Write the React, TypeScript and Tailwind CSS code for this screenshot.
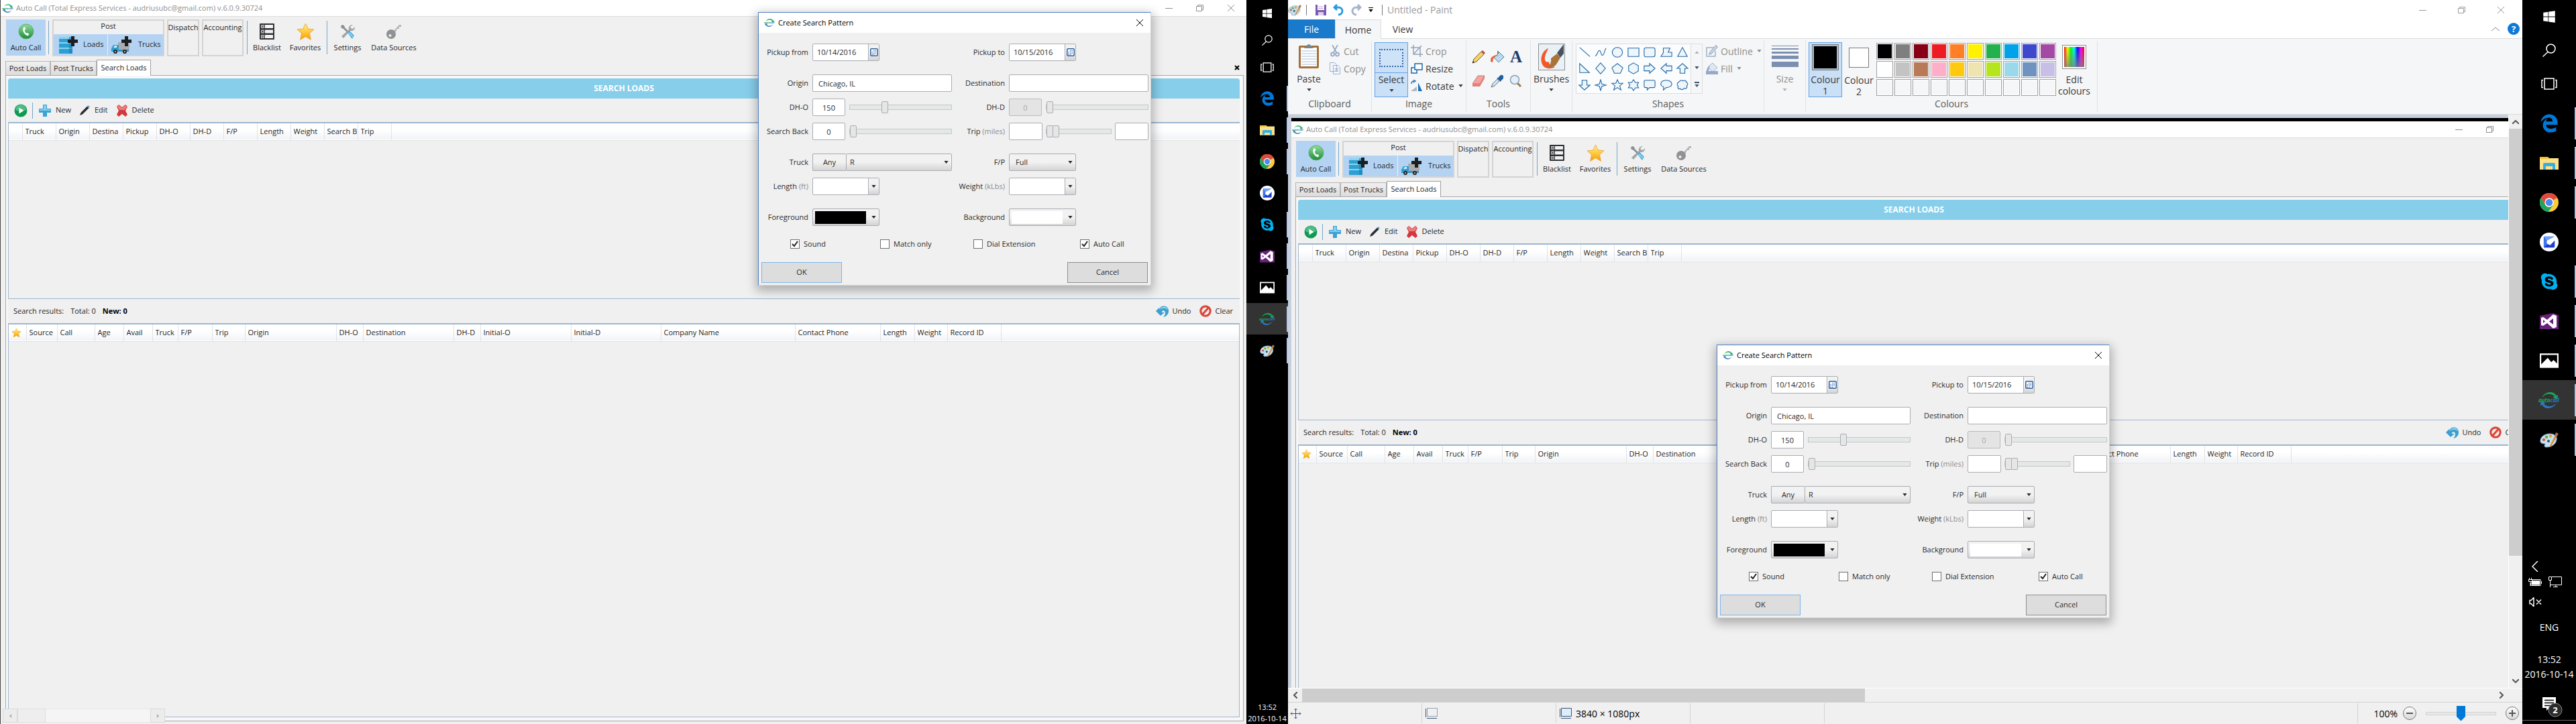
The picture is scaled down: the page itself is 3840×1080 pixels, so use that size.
import React, { useId } from "react";
import { FaWindows, FaSkype } from "react-icons/fa";
import { FaEdgeLegacy } from "react-icons/fa6";

type Kids = { children?: React.ReactNode };

/* ---------- icons ---------- */

function Logo({ className }: { className: string }) {
  return (
    <svg viewBox="0 0 24 20" className={className} aria-hidden="true">
      <path d="M4 7C7 0 17-1 20 5l2-1-1 5-5-2 2-1C15 2 8 2 4 7z" fill="#16a757" />
      <path d="M20 13c-3 7-13 8-16 2l-2 1 1-5 5 2-2 1c3 4 10 4 14-1z" fill="#2f77bd" />
      <text x="0" y="12" fontSize="6" fontStyle="italic" fontWeight="700" fontFamily="Open Sans, sans-serif" fill="#16a757">
        auto<tspan fill="#2f77bd">call</tspan>
      </text>
    </svg>
  );
}

function Phone() {
  return (
    <svg viewBox="0 0 24 24" className="size-6" aria-hidden="true">
      <defs>
        <linearGradient id="phoneGreen" x1="0" y1="0" x2="0" y2="1">
          <stop offset="0" stopColor="#8fdc9a" />
          <stop offset="1" stopColor="#1d8c3c" />
        </linearGradient>
      </defs>
      <circle cx="12" cy="12" r="11" fill="url(#phoneGreen)" stroke="#58b26b" />
      <path d="M8.500 5.500c-3 4-.5 10.500 6 13l2-2.500-2.500-2-1.500.8c-2-1.300-2.700-3-2.700-5l1.500-1-.8-3.500z" fill="#fff" />
    </svg>
  );
}

function LoadsIcon() {
  return (
    <svg viewBox="0 0 30 28" className="h-7 w-[30px]" aria-hidden="true">
      <rect x="1" y="2" width="20" height="25" rx="1" fill="#2e9fd2" />
      <path d="M1 2h20v3H1zM1 10h20v2H1zM1 18h20v2H1z" fill="#8ad4f0" />
      <path d="M16 2h5v25h-5z" fill="#1b7eb0" opacity=".6" />
      <path d="M19 1h5v5h5v5h-5v5h-5v-5h-5V6h5z" fill="#1c1f22" />
    </svg>
  );
}

function TrucksIcon() {
  return (
    <svg viewBox="0 0 34 28" className="h-7 w-[34px]" aria-hidden="true">
      <path d="M11 10h15l2 3v8H11z" fill="#a9abae" />
      <path d="M1 24v-5l3-5h8v10z" fill="#2e9fd2" />
      <path d="M4 18l2-3h3v3z" fill="#d8effa" />
      <path d="M12 21h15v3H12z" fill="#3f8fb8" />
      <circle cx="7" cy="24" r="3" fill="#222" />
      <circle cx="21" cy="24" r="3" fill="#222" />
      <circle cx="7" cy="24" r="1" fill="#ddd" />
      <circle cx="21" cy="24" r="1" fill="#ddd" />
      <path d="M21 1h5v5h5v5h-5v5h-5v-5h-5V6h5z" fill="#1c1f22" />
    </svg>
  );
}

function Blacklist() {
  return (
    <svg viewBox="0 0 24 26" className="h-[26px] w-6" aria-hidden="true">
      <rect x="1" y="1" width="22" height="24" rx="1" fill="#2f3134" />
      <path d="M9 3h12v5H9zM9 10.500h12v5H9zM9 18h12v5H9z" fill="#f2f2f2" />
      <path d="M3 3h5v5H3zM3 10.500h5v5H3zM3 18h5v5H3z" fill="#c9c9c9" />
      <path d="M4 4l3 3m0-3L4 7M4 11.500l3 3m0-3l-3 3M4 19l3 3m0-3l-3 3" stroke="#222" />
    </svg>
  );
}

function Star({ className }: { className: string }) {
  return (
    <svg viewBox="0 0 24 24" className={className} aria-hidden="true">
      <defs>
        <linearGradient id="starGold" x1="0" y1="0" x2="0" y2="1">
          <stop offset="0" stopColor="#fff0a0" />
          <stop offset=".5" stopColor="#fdcb3c" />
          <stop offset="1" stopColor="#f49a10" />
        </linearGradient>
      </defs>
      <path d="M12 1l3.300 7 7.700.8-5.700 5.200 1.700 8.500-7-4.200-7 4.200L6.700 14 1 8.800 8.700 8z" fill="url(#starGold)" stroke="#eda52c" strokeWidth=".8" />
    </svg>
  );
}

function Tools() {
  return (
    <svg viewBox="0 0 24 24" className="size-6" aria-hidden="true">
      <path d="M20 2a5.500 5.500 0 00-6 7L3 19l3 3L16 11a5.500 5.500 0 007-6l-3 3-3-1-.5-2.500z" fill="#a4a7aa" />
      <path d="M2 4l2-2 3 1 1 3 5 5-2 2-5-5-3-1z" fill="#8d9094" />
      <path d="M12 14l3-3 7 7-3 5z" fill="#3ba7dc" />
      <path d="M13 15l2-2 6 6-1 2z" fill="#8ed0ee" />
    </svg>
  );
}

function Key() {
  return (
    <svg viewBox="0 0 24 24" className="size-6" aria-hidden="true">
      <path d="M11 12L20 2h3v3h-3v3h-3l-3 6z" fill="#b4b6b8" />
      <circle cx="8" cy="16" r="7" fill="#8f9194" />
      <circle cx="6.500" cy="18" r="2" fill="#efefef" />
    </svg>
  );
}

function Play() {
  return (
    <svg viewBox="0 0 20 20" className="size-5" aria-hidden="true">
      <circle cx="10" cy="10" r="9.500" fill="#0f9a52" />
      <path d="M2 9a8 8 0 0116 0c-5 2-11 2-16 0z" fill="#6cc99a" opacity=".7" />
      <path d="M7.500 5.500l7 4.500-7 4.500z" fill="#fff" />
    </svg>
  );
}

function Plus() {
  return (
    <svg viewBox="0 0 18 18" className="size-[18px]" aria-hidden="true">
      <path d="M6 0h6v6h6v6h-6v6H6v-6H0V6h6z" fill="#3aa3d5" />
      <path d="M7 1h4v6h6v2H1V7h6z" fill="#86cdec" />
    </svg>
  );
}

function Pen() {
  return (
    <svg viewBox="0 0 16 16" className="size-4" aria-hidden="true">
      <path d="M1 15l1.500-4L12 1.500 14.500 4 5 13.500z" fill="#2b2d30" />
      <path d="M12 1.500L13.500 0 16 2.500 14.500 4z" fill="#5aa8d0" />
    </svg>
  );
}

function Cross() {
  return (
    <svg viewBox="0 0 18 18" className="size-[18px]" aria-hidden="true">
      <path d="M1 3l3-3 5 4 5-4 3 3-3 6 3 6-3 3-5-4-5 4-3-3 3-6z" fill="#d2383c" />
      <path d="M2 3l2-2 5 4 5-4 2 2-3 5H5z" fill="#ea7f80" />
    </svg>
  );
}

function UndoIcon() {
  return (
    <svg viewBox="0 0 20 18" className="h-[18px] w-5" aria-hidden="true">
      <path d="M0 9l5-5v3C6 0 18-1 19 8c.5 5-3 9-8 10 3-3 4-7 2-9-2-1.500-4-.5-4 2h4l-6 5z" fill="#3c9fd0" />
      <path d="M6 7c2-6 11-6 12 0-4-3-8-3-12 0z" fill="#93d3ee" />
    </svg>
  );
}

function ClearIcon() {
  return (
    <svg viewBox="0 0 20 20" className="size-[18px]" aria-hidden="true">
      <circle cx="10" cy="10" r="8" fill="#fbe9e6" stroke="#d6483c" strokeWidth="3.500" />
      <path d="M5 15.500L15 4.500" stroke="#d6483c" strokeWidth="3.500" />
    </svg>
  );
}

function Calendar() {
  return (
    <svg viewBox="0 0 12 12" className="size-3" aria-hidden="true">
      <rect x=".75" y=".75" width="10.500" height="10.500" rx="1.500" fill="#fff" stroke="#2c5f9f" strokeWidth="1.500" />
      <path d="M5 3.500h5M2.500 5.500h7.500M2.500 7.500h7.500M2.500 9.500h4" stroke="#3d72b4" strokeDasharray="1.500 1" strokeWidth="1.200" />
    </svg>
  );
}

function Caret({ className }: { className: string }) {
  return (
    <svg viewBox="0 0 8 5" className={className} aria-hidden="true">
      <path d="M0 0h8L4 5z" fill="currentColor" />
    </svg>
  );
}

function PaletteIcon({ className }: { className: string }) {
  return (
    <svg viewBox="0 0 28 24" className={className} aria-hidden="true">
      <path d="M1 15C0 8 7 3 15 3c7 0 11 4 10 9-1 7-8 11-15 11-3 0-4-2-2-4 1-2-6 0-7-4z" fill="#c5e0f0" stroke="#7aa7c4" />
      <circle cx="6" cy="12" r="2" fill="#e0453a" />
      <circle cx="10" cy="8" r="2.200" fill="#5fb336" />
      <circle cx="16" cy="6.500" r="2.200" fill="#e7a21c" />
      <circle cx="13" cy="14" r="2" fill="#28557a" />
      <path d="M14 23l8-16 3 1-9 15z" fill="#e08a35" />
      <path d="M22 7l2-6 4 2-3 5z" fill="#a97748" />
    </svg>
  );
}

function MinGlyph() {
  return (
    <svg viewBox="0 0 12 12" className="size-3" aria-hidden="true">
      <path d="M0 6.500h11" stroke="currentColor" />
    </svg>
  );
}
function RestoreGlyph() {
  return (
    <svg viewBox="0 0 12 12" className="size-3" fill="none" stroke="currentColor" aria-hidden="true">
      <path d="M.5 3.500h8v7h-8zM2.500 3.500v-2h8v7h-2" />
    </svg>
  );
}
function CloseGlyph() {
  return (
    <svg viewBox="0 0 12 12" className="size-3" stroke="currentColor" aria-hidden="true">
      <path d="M1 1l10 10M11 1L1 11" />
    </svg>
  );
}

/* ---------- pattern dialog ---------- */

const box = "border border-[#abadb3] rounded-[2px] bg-white";
const grad = "bg-linear-to-b from-[#f2f2f2] from-50% to-[#d4d4d4]";
const rangeCls =
  "block h-[18px] w-full min-w-0 appearance-none bg-transparent [&::-webkit-slider-runnable-track]:h-2 [&::-webkit-slider-runnable-track]:border [&::-webkit-slider-runnable-track]:border-[#c3c8c8] [&::-webkit-slider-runnable-track]:bg-[#e4e9e7] [&::-webkit-slider-thumb]:-mt-[6px] [&::-webkit-slider-thumb]:h-[18px] [&::-webkit-slider-thumb]:w-[10px] [&::-webkit-slider-thumb]:appearance-none [&::-webkit-slider-thumb]:rounded-[2px] [&::-webkit-slider-thumb]:border [&::-webkit-slider-thumb]:border-[#adadb3] [&::-webkit-slider-thumb]:bg-[#e6e6e6]";
const overlayRangeCls =
  "pointer-events-none absolute inset-0 block h-[18px] w-full appearance-none bg-transparent [&::-webkit-slider-thumb]:h-[18px] [&::-webkit-slider-thumb]:w-[10px] [&::-webkit-slider-thumb]:appearance-none [&::-webkit-slider-thumb]:rounded-[2px] [&::-webkit-slider-thumb]:border [&::-webkit-slider-thumb]:border-[#adadb3] [&::-webkit-slider-thumb]:bg-[#e6e6e6]";

function FieldLabel({ htmlFor, text, unit }: { htmlFor: string; text: string; unit?: string }) {
  return (
    <label htmlFor={htmlFor} className="pr-[6px] text-right whitespace-nowrap">
      {text}
      {unit && <span className="text-[#8c8c8c]"> {unit}</span>}
    </label>
  );
}

function Row({ top, children }: Kids & { top: string }) {
  return <div className={`grid h-[26px] grid-cols-[80px_208px_85px_208px] items-center ${top}`}>{children}</div>;
}

function DateField({ id, value }: { id: string; value: string }) {
  return (
    <div className={`flex h-[26px] w-[100px] ${box}`}>
      <input id={id} defaultValue={value} className="min-w-0 flex-1 pl-[6px]" />
      <button aria-label="Open calendar" className={`flex w-4 items-center justify-center border-l border-[#abadb3] ${grad}`}>
        <Calendar />
      </button>
    </div>
  );
}

function ComboField({ id }: { id: string }) {
  return (
    <div className={`flex h-[26px] w-[100px] ${box}`}>
      <input id={id} className="min-w-0 flex-1 pl-[6px]" />
      <button aria-label="Open list" className={`flex w-4 items-center justify-center border-l border-[#abadb3] ${grad}`}>
        <Caret className="h-1 w-[7px]" />
      </button>
    </div>
  );
}

function ColorField({ id, swatch }: { id: string; swatch: string }) {
  return (
    <button id={id} className={`flex h-[26px] w-[100px] items-center justify-between border border-[#abadb3] rounded-[2px] pr-1 pl-[3px] ${grad}`}>
      <span className={`h-[19px] w-[76px] ${swatch}`} />
      <Caret className="h-1 w-[7px]" />
    </button>
  );
}

function SelectField({ id, options, pad }: { id: string; options: string[]; pad: string }) {
  return (
    <div className="relative h-full w-full">
      <select id={id} className={`h-full w-full appearance-none border border-[#abadb3] rounded-[2px] ${pad} ${grad}`}>
        {options.map((o) => (
          <option key={o}>{o}</option>
        ))}
      </select>
      <Caret className="pointer-events-none absolute top-[11px] right-[5px] h-1 w-[7px]" />
    </div>
  );
}

function Check({ id, text, checked }: { id: string; text: string; checked?: boolean }) {
  return (
    <div className="flex items-center gap-[6px]">
      <span className="relative block size-[14px]">
        <input id={id} type="checkbox" defaultChecked={checked} className="peer block size-[14px] appearance-none border border-[#707070] bg-white" />
        <svg viewBox="0 0 14 14" className="pointer-events-none absolute inset-0 hidden size-[14px] peer-checked:block" aria-hidden="true">
          <path d="M3 7l3 3 5-7" fill="none" stroke="#212121" strokeWidth="2" />
        </svg>
      </span>
      <label htmlFor={id}>{text}</label>
    </div>
  );
}

function PatternDialog({ place }: { place: string }) {
  const id = useId();
  const num = `h-[26px] text-center ${box}`;
  return (
    <section
      aria-label="Create Search Pattern"
      className={`absolute ${place} h-[408px] w-[586px] border border-[#d4d4d4] border-t-[#4a7fc8] border-l-[#4a7fc8] bg-[#f0f0f0] text-[11px] text-[#2b2b2b] shadow-[0_5px_14px_3px_rgba(0,0,0,0.28)]`}
    >
      <header className="flex h-[30px] items-center bg-white pl-2 text-black">
        <Logo className="h-[14px] w-4" />
        <h2 className="ml-[5px] flex-1">Create Search Pattern</h2>
        <button aria-label="Close dialog" className="mr-[10px]">
          <CloseGlyph />
        </button>
      </header>
      <Row top="mt-4">
        <FieldLabel htmlFor={`${id}from`} text="Pickup from" />
        <DateField id={`${id}from`} value="10/14/2016" />
        <FieldLabel htmlFor={`${id}to`} text="Pickup to" />
        <DateField id={`${id}to`} value="10/15/2016" />
      </Row>
      <Row top="mt-5">
        <FieldLabel htmlFor={`${id}origin`} text="Origin" />
        <input id={`${id}origin`} defaultValue="Chicago, IL" className={`h-[26px] pl-2 ${box}`} />
        <FieldLabel htmlFor={`${id}dest`} text="Destination" />
        <input id={`${id}dest`} className={`h-[26px] pl-2 ${box}`} />
      </Row>
      <Row top="mt-[10px]">
        <FieldLabel htmlFor={`${id}dho`} text="DH-O" />
        <div className="flex items-center gap-[6px]">
          <input id={`${id}dho`} defaultValue="150" className={`w-[49px] shrink-0 ${num}`} />
          <input type="range" aria-label="DH-O distance" min={0} max={450} defaultValue={150} className={rangeCls} />
        </div>
        <FieldLabel htmlFor={`${id}dhd`} text="DH-D" />
        <div className="flex items-center gap-[6px]">
          <input id={`${id}dhd`} defaultValue="0" disabled className="h-[26px] w-[49px] shrink-0 rounded-[2px] border border-[#b9babd] bg-[#e4e4e4] text-center text-[#a8a8a8]" />
          <input type="range" aria-label="DH-D distance" min={0} max={450} defaultValue={0} disabled className={rangeCls} />
        </div>
      </Row>
      <Row top="mt-[10px]">
        <FieldLabel htmlFor={`${id}back`} text="Search Back" />
        <div className="flex items-center gap-[6px]">
          <input id={`${id}back`} defaultValue="0" className={`w-[49px] shrink-0 ${num}`} />
          <input type="range" aria-label="Search back hours" min={0} max={24} defaultValue={0} className={rangeCls} />
        </div>
        <FieldLabel htmlFor={`${id}trip`} text="Trip" unit="(miles)" />
        <div className="flex items-center gap-[5px]">
          <input id={`${id}trip`} className={`w-[50px] shrink-0 ${num}`} />
          <span className="relative min-w-0 flex-1">
            <input type="range" aria-label="Trip minimum" min={0} max={88} defaultValue={0} className={rangeCls} />
            <input type="range" aria-label="Trip maximum" min={0} max={88} defaultValue={10} className={overlayRangeCls} />
          </span>
          <input aria-label="Trip maximum miles" className={`w-[50px] shrink-0 ${num}`} />
        </div>
      </Row>
      <Row top="mt-5">
        <FieldLabel htmlFor={`${id}truck`} text="Truck" />
        <div className="flex h-[26px]">
          <button className={`w-[50px] shrink-0 rounded-l-[2px] border border-r-0 border-[#abadb3] ${grad}`}>Any</button>
          <SelectField id={`${id}truck`} options={["R", "V", "F"]} pad="pl-[5px]" />
        </div>
        <FieldLabel htmlFor={`${id}fp`} text="F/P" />
        <div className="h-[26px] w-[100px]">
          <SelectField id={`${id}fp`} options={["Full", "Partial"]} pad="pl-[9px]" />
        </div>
      </Row>
      <Row top="mt-[10px]">
        <FieldLabel htmlFor={`${id}len`} text="Length" unit="(ft)" />
        <ComboField id={`${id}len`} />
        <FieldLabel htmlFor={`${id}wt`} text="Weight" unit="(kLbs)" />
        <ComboField id={`${id}wt`} />
      </Row>
      <Row top="mt-5">
        <FieldLabel htmlFor={`${id}fg`} text="Foreground" />
        <ColorField id={`${id}fg`} swatch="bg-black" />
        <FieldLabel htmlFor={`${id}bg`} text="Background" />
        <ColorField id={`${id}bg`} swatch="bg-white" />
      </Row>
      <div className="mt-[19px] grid grid-cols-[134px_139px_159px_auto] pl-[47px]">
        <Check id={`${id}sound`} text="Sound" checked />
        <Check id={`${id}match`} text="Match only" />
        <Check id={`${id}dial`} text="Dial Extension" />
        <Check id={`${id}auto`} text="Auto Call" checked />
      </div>
      <div className="mt-[18px] flex justify-between px-1">
        <button className="h-[31px] w-[120px] border border-[#7eb4ea] bg-[#dddddd]">OK</button>
        <button className="h-[31px] w-[120px] border border-[#8e8e8e] bg-[#dddddd]">Cancel</button>
      </div>
    </section>
  );
}

/* ---------- load board window ---------- */

function ToolButton({ width, label, active, children }: Kids & { width: string; label: string; active?: boolean }) {
  return (
    <button className={`flex h-[54px] flex-col items-center justify-between pt-[5px] pb-1 ${width} ${active ? "bg-[#b4d3f2]" : ""}`}>
      <span className="flex h-[26px] items-center">{children}</span>
      <span className="leading-4 whitespace-nowrap">{label}</span>
    </button>
  );
}

function Divider({ className }: { className: string }) {
  return <span className={`w-px bg-[#74a5cc] ${className}`} />;
}

type Col = [React.ReactNode, number];

const patternCols: Col[] = [
  ["", 20], ["Truck", 50], ["Origin", 50], ["Destina", 50], ["Pickup", 50], ["DH-O", 50], ["DH-D", 50],
  ["F/P", 50], ["Length", 50], ["Weight", 50], ["Search B", 50], ["Trip", 50],
];

const resultCols: Col[] = [
  [<Star key="s" className="size-[15px]" />, 26], ["Source", 46], ["Call", 56], ["Age", 43], ["Avail", 43], ["Truck", 38], ["F/P", 51],
  ["Trip", 49], ["Origin", 136], ["DH-O", 40], ["Destination", 135], ["DH-D", 40], ["Initial-O", 135], ["Initial-D", 134],
  ["Company Name", 200], ["Contact Phone", 127], ["Length", 51], ["Weight", 49], ["Record ID", 80],
];

function HeaderTable({ cols }: { cols: Col[] }) {
  return (
    <table className="w-full table-fixed border-collapse">
      <colgroup>
        {cols.map((c, i) => (
          <col key={i} style={{ width: c[1] }} />
        ))}
        <col />
      </colgroup>
      <thead>
        <tr className="h-[25px] border-b border-[#dfe1e4] bg-linear-to-b from-white from-40% to-[#f1f3f6]">
          {cols.map((c, i) => (
            <th key={i} scope="col" className="overflow-hidden border-r border-[#e0e2e5] pr-px pl-1 text-left font-normal whitespace-nowrap">
              <span className="block overflow-hidden">{c[0]}</span>
            </th>
          ))}
          <th aria-hidden="true" />
        </tr>
      </thead>
    </table>
  );
}

function BoardWindow({ dialogPlace }: { dialogPlace: string }) {
  const tab = "h-[21px] border border-b-0 border-[#b5b5b5] bg-linear-to-b from-[#f0f0f0] to-[#dcdcdc]";
  const groupBox = "flex h-[55px] justify-center border-2 border-[#d3d3d3] pt-[2px] leading-4";
  return (
    <div className="relative flex h-full w-full flex-col border-l border-[#444] bg-[#f0f0f0] text-[11px] text-[#262626]">
      <header className="flex h-[25px] items-center border-b border-[#dcdcdc] bg-white pl-[2px] text-[#8f8f8f]">
        <Logo className="h-[15px] w-[17px]" />
        <h1 className="ml-1 flex-1">Auto Call (Total Express Services - audriusubc@gmail.com) v.6.0.9.30724</h1>
        <button aria-label="Minimise" className="flex w-[46px] justify-center"><MinGlyph /></button>
        <button aria-label="Restore" className="flex w-[46px] justify-center"><RestoreGlyph /></button>
        <button aria-label="Close" className="flex w-[46px] justify-center"><CloseGlyph /></button>
      </header>

      <nav className="flex h-16 items-start pt-1 pl-2" aria-label="Main tools">
        <ToolButton width="w-[59px]" label="Auto Call" active><Phone /></ToolButton>
        <Divider className="mt-[2px] ml-1 h-[50px]" />
        <div className="ml-[5px] h-[55px] w-[167px] border-2 border-[#d3d3d3]">
          <div className="h-5 text-center leading-4">Post</div>
          <div className="flex h-[31px] gap-px">
            <button className="flex w-[80px] items-center gap-[7px] bg-[#b4d3f2] pl-[7px]"><LoadsIcon />Loads</button>
            <button className="flex flex-1 items-center gap-[7px] bg-[#b4d3f2] pl-1"><TrucksIcon />Trucks</button>
          </div>
        </div>
        <div className={`ml-1 w-[48px] ${groupBox}`}>Dispatch</div>
        <div className={`ml-1 w-[62px] ${groupBox}`}>Accounting</div>
        <Divider className="mt-[2px] ml-[5px] h-[50px]" />
        <ToolButton width="ml-[3px] w-[52px]" label="Blacklist"><Blacklist /></ToolButton>
        <ToolButton width="ml-1 w-[54px]" label="Favorites"><Star className="size-[27px]" /></ToolButton>
        <Divider className="mt-[2px] ml-[5px] h-[50px]" />
        <ToolButton width="ml-[3px] w-[54px]" label="Settings"><Tools /></ToolButton>
        <ToolButton width="ml-[2px] w-[80px]" label="Data Sources"><Key /></ToolButton>
      </nav>

      <div className="relative z-10 flex h-6 items-end pl-[7px]" role="tablist">
        <button role="tab" className={`w-[67px] ${tab} mb-px`}>Post Loads</button>
        <button role="tab" className={`w-[69px] ${tab} mb-px`}>Post Trucks</button>
        <button role="tab" aria-selected="true" className="h-6 w-[81px] border border-b-0 border-[#a0a0a0] bg-white">Search Loads</button>
        <span className="flex-1" />
        <button aria-label="Close tab" className="mr-[10px] mb-[8px] text-black">
          <svg viewBox="0 0 8 8" className="size-2" stroke="currentColor" strokeWidth="2" aria-hidden="true"><path d="M1 1l6 6M7 1L1 7" /></svg>
        </button>
      </div>

      <main className="-mt-px mr-1 mb-1 ml-[7px] flex min-h-0 flex-1 flex-col border border-[#a9a9a9] bg-[#f8f8f8] pt-1 pr-[5px] pb-[5px] pl-[3px]">
        <div className="flex min-h-0 flex-1 flex-col bg-[#f0f0f0]">
          <h2 className="flex h-[30px] shrink-0 items-center justify-center rounded-t-[4px] bg-[#87ceeb] text-[12px] font-bold text-white">SEARCH LOADS</h2>
          <div className="flex h-[35px] shrink-0 items-center pl-[9px]">
            <button aria-label="Run search"><Play /></button>
            <Divider className="ml-[7px] h-6" />
            <button className="ml-[9px] flex items-center gap-[7px]"><Plus />New</button>
            <button className="ml-3 flex items-center gap-[7px]"><Pen />Edit</button>
            <button className="ml-3 flex items-center gap-[6px]"><Cross />Delete</button>
          </div>
          <div className="h-[264px] shrink-0 border border-t-2 border-r-0 border-[#9db6d0]">
            <HeaderTable cols={patternCols} />
          </div>
          <div className="flex h-9 shrink-0 items-center pr-[10px] pl-2">
            <span>Search results:</span>
            <span className="ml-[10px]">Total: 0</span>
            <strong className="ml-[10px] text-black">New: 0</strong>
            <span className="flex-1" />
            <button className="flex items-center gap-1"><UndoIcon />Undo</button>
            <button className="ml-3 flex items-center gap-[6px]"><ClearIcon />Clear</button>
          </div>
          <div className="min-h-0 flex-1 border border-t-2 border-[#9db6d0]">
            <HeaderTable cols={resultCols} />
          </div>
        </div>
      </main>
      <PatternDialog place={dialogPlace} />
    </div>
  );
}

/* ---------- task bar ---------- */

function FolderIcon() {
  return (
    <svg viewBox="0 0 28 24" className="h-full w-full" aria-hidden="true">
      <path d="M0 3h12l2 2h14v17H0z" fill="#fbe08b" />
      <path d="M0 3h12l1 3H0z" fill="#f2c230" />
      <path d="M5 22v-8q0-2 2-2h14q2 0 2 2v8h-4v-5H9v5z" fill="#35aee2" />
    </svg>
  );
}
function ChromeIcon() {
  return (
    <svg viewBox="0 0 24 24" className="h-full w-full" aria-hidden="true">
      <circle cx="12" cy="12" r="12" fill="#fccb3c" />
      <path d="M12 12L1.600 6A12 12 0 0122.400 6z" fill="#dd4b3e" />
      <path d="M12 6h10.400A12 12 0 001.600 6l5.200 9z" fill="#dd4b3e" />
      <path d="M1.600 6l5.200 9A6 6 0 0012 18l-1 6A12 12 0 011.600 6z" fill="#1da362" />
      <path d="M11 24l6.200-9L12 17z" fill="#1da362" />
      <circle cx="12" cy="12" r="5.700" fill="#fff" />
      <circle cx="12" cy="12" r="4.500" fill="#4a8af4" />
    </svg>
  );
}
function SwirlIcon() {
  return (
    <svg viewBox="0 0 24 24" className="h-full w-full" aria-hidden="true">
      <circle cx="12" cy="12" r="12" fill="#fff" />
      <path d="M5 6q0-1 1-1h13l-8 6 8-1v8q0 1-1 1H6q-1 0-1-1z" fill="#3f74f0" />
      <path d="M5 19l6-5 3 2 5-6v8q0 1-1 1z" fill="#1c3fd0" />
      <path d="M9 10l10-5v5l-6 6-4-2z" fill="#fff" />
      <path d="M5 5h14L9 10z" fill="#6fa0ff" />
    </svg>
  );
}
function StudioIcon() {
  return (
    <svg viewBox="0 0 28 24" className="h-full w-full" aria-hidden="true">
      <path d="M0 4l20-4 8 3v21H0z" fill="#68217a" />
      <path fillRule="evenodd" d="M2 7l3-1 6 4 9-8 5 2v17l-5 2-9-8-6 4-3-1zm3 3v5l3-2.500zm15-2l-6 4.500 6 4.500z" fill="#fff" />
    </svg>
  );
}
function PhotoIcon() {
  return (
    <svg viewBox="0 0 26 24" className="h-full w-full" aria-hidden="true">
      <path d="M0 2h26v20H0z" fill="#fff" />
      <path d="M2 4h22v12l-5-5-3 3-5-6-9 9z" fill="#000" />
    </svg>
  );
}

function TaskBar({ large }: { large?: boolean }) {
  const start = large ? "h-[50px]" : "h-10";
  const slot = large ? "h-[59px]" : "h-[47px]";
  const size = large ? "h-7 w-7" : "h-[22px] w-[22px]";
  const strip = large ? "h-12" : "h-[38px]";
  const apps: { name: string; icon: React.ReactNode; open: boolean; active?: boolean }[] = [
    { name: "Edge", icon: <FaEdgeLegacy className="h-full w-full text-[#0078d7]" />, open: true },
    { name: "File Explorer", icon: <FolderIcon />, open: true },
    { name: "Chrome", icon: <ChromeIcon />, open: true },
    { name: "Messenger", icon: <SwirlIcon />, open: false },
    { name: "Skype", icon: <FaSkype className="h-full w-full text-[#00aff0]" />, open: true },
    { name: "Visual Studio", icon: <StudioIcon />, open: true },
    { name: "Photos", icon: <PhotoIcon />, open: true },
    { name: "Auto Call", icon: <Logo className="h-full w-full" />, open: true, active: true },
    { name: "Paint", icon: <PaletteIcon className="h-full w-full" />, open: true },
  ];
  return (
    <aside className={`flex shrink-0 flex-col bg-black text-white ${large ? "w-20 text-[14px]" : "w-[62px] text-[11px]"}`} aria-label="Taskbar">
      <button aria-label="Start" className={`flex items-center justify-center ${start}`}>
        <FaWindows className={large ? "size-5" : "size-4"} />
      </button>
      <button aria-label="Search" className={`flex items-center justify-center ${start}`}>
        <svg viewBox="0 0 20 20" className={large ? "size-5" : "size-4"} fill="none" stroke="#fff" strokeWidth="1.500" aria-hidden="true">
          <circle cx="12.500" cy="7.500" r="6.500" />
          <path d="M8 12.500L.5 19.500" />
        </svg>
      </button>
      <button aria-label="Task view" className={`flex items-center justify-center ${start}`}>
        <svg viewBox="0 0 24 18" className={large ? "h-[18px] w-6" : "h-[15px] w-5"} fill="none" stroke="#fff" strokeWidth="1.500" aria-hidden="true">
          <path d="M5 1h14v16H5zM3 3.500H1v11h2M21 3.500h2v11h-2" />
        </svg>
      </button>
      <div className={large ? "mt-1" : "mt-[3px]"}>
        {apps.map((a) => (
          <button key={a.name} aria-label={a.name} className={`flex w-full items-center ${slot} ${a.active ? "bg-[#333333]" : ""}`}>
            <span className="flex flex-1 justify-center pl-[2px]">
              <span className={a.active ? (large ? "h-7 w-8" : "h-[22px] w-6") : size}>{a.icon}</span>
            </span>
            <span className={`w-[2px] ${strip} ${a.open ? "bg-[#adc8f5]" : ""}`} />
          </button>
        ))}
      </div>
      <span className="flex-1" />
      {large ? (
        <>
          <div className="grid w-[60px] grid-cols-2 items-center justify-items-center gap-x-2 pl-2">
            <button aria-label="Show hidden icons" className="h-[29px]">
              <svg viewBox="0 0 10 16" className="h-4 w-[10px]" fill="none" stroke="#fff" strokeWidth="1.500" aria-hidden="true"><path d="M9 0L1 8l8 8" /></svg>
            </button>
            <span />
            <svg viewBox="0 0 20 14" className="h-[14px] w-5" fill="none" stroke="#fff" aria-hidden="true">
              <path d="M5 3.500h13v9H3.500V9M1.500 1v2m3-2v2M.5 3.500h5v3h-5zM3 7v6M19.500 6v4" /><path d="M6 5.500h10.500v5.500H5V8z" fill="#fff" />
            </svg>
            <svg viewBox="0 0 20 18" className="h-[18px] w-5" fill="none" stroke="#fff" aria-hidden="true">
              <path d="M5 1.500h14.500v12H3M11 14v2M7 16.500h7M.5 1.500h4v5h-4zM2.500 7v10" />
            </svg>
            <svg viewBox="0 0 19 14" className="mt-[14px] h-[14px] w-[19px]" fill="none" stroke="#fff" strokeWidth="1.500" aria-hidden="true">
              <path d="M1 4.500h2l4-4v13l-4-4H1zM11 3.500l7 7M18 3.500l-7 7" />
            </svg>
          </div>
          <div className="mt-5 text-center leading-[22px]">ENG</div>
          <div className="mt-[26px] text-center leading-[22px] whitespace-nowrap">
            <div>13:52</div>
            <div>2016-10-14</div>
          </div>
          <button aria-label="Notifications" className="mt-[22px] ml-[29px] h-[31px] w-[31px]">
            <svg viewBox="0 0 31 31" className="size-[31px]" aria-hidden="true">
              <path d="M1 1h20v16H11l-4 4v-4H1z" fill="#fff" />
              <path d="M4 5.500h14M4 9.500h14M4 13.500h9" stroke="#000" strokeWidth="1.500" />
              <circle cx="20" cy="20" r="10" fill="#2b2b2b" stroke="#8c8c8c" />
              <text x="20" y="25" textAnchor="middle" fontSize="13" fontWeight="700" fill="#fff">2</text>
            </svg>
          </button>
          <span className="mt-1 mb-[5px] h-px bg-[#666]" />
        </>
      ) : (
        <div className="text-center leading-[17px] whitespace-nowrap">
          <div>13:52</div>
          <div>2016-10-14</div>
        </div>
      )}
    </aside>
  );
}

/* ---------- paint ---------- */

const shapePaths = [
  "M2 1l17 15", "M1 15c4-1 4-9 7-9s2 8 5 8 3-8 6-12", "M10 1a8.500 8 0 100 16 8.500 8 0 000-16z", "M1 2h18v14H1z",
  "M4 1.500h12q3 0 3 3v9q0 3-3 3H4q-3 0-3-3v-9q0-3 3-3z", "M5 2h11l-3 7h6v7H1l4-6z", "M10 1l8 15H2z",
  "M2 1v15h16z", "M10 0l8 9-8 9-8-9z", "M10 1l9 7-4 9H5L1 8z", "M10 0l8 4.500v9L10 18l-8-4.500v-9z",
  "M1 5h9V1l9 8-9 8v-4H1z", "M19 5h-9V1L1 9l9 8v-4h9z", "M6 17V9H1l9-8 9 8h-5v8z",
  "M6 1v8H1l9 8 9-8h-5V1z", "M10 0l2 7 7 2-7 2-2 7-2-7-7-2 7-2z", "M10 0l2.500 6H19l-5 4 2 7-6-4-6 4 2-7-5-4h6.500z",
  "M10 0l3 4.500h5.500L16 9l2.500 4.500H13L10 18l-3-4.500H1.500L4 9 1.500 4.500H7z",
  "M3 1h14q2 0 2 2v8q0 2-2 2h-7l-4 4v-4H3q-2 0-2-2V3q0-2 2-2z", "M10 1c12 0 12 12 0 12l-5 4 .5-5C-2 9 0 1 10 1z",
  "M5 3c2-3 5-2 6-1 3-2 6 0 5 2 3 1 4 4 1 6 2 3-1 6-4 4-2 3-5 3-6 1-4 1-6-2-4-4-3-2-2-6 2-8z",
];

const swatches = [
  "bg-[#000000]", "bg-[#7f7f7f]", "bg-[#880015]", "bg-[#ed1c24]", "bg-[#ff7f27]", "bg-[#fff200]", "bg-[#22b14c]", "bg-[#00a2e8]", "bg-[#3f48cc]", "bg-[#a349a4]",
  "bg-[#ffffff]", "bg-[#c3c3c3]", "bg-[#b97a57]", "bg-[#ffaec9]", "bg-[#ffc90e]", "bg-[#efe4b0]", "bg-[#b5e61d]", "bg-[#99d9ea]", "bg-[#7092be]", "bg-[#c8bfe7]",
  "bg-[#f5f6f7]", "bg-[#f5f6f7]", "bg-[#f5f6f7]", "bg-[#f5f6f7]", "bg-[#f5f6f7]", "bg-[#f5f6f7]", "bg-[#f5f6f7]", "bg-[#f5f6f7]", "bg-[#f5f6f7]", "bg-[#f5f6f7]",
];

function Group({ width, label, children }: Kids & { width: string; label?: string }) {
  return (
    <section className={`my-[3px] flex flex-col border-r border-[#e0e1e3] ${width}`}>
      <div className="flex flex-1 items-start pt-[2px]">{children}</div>
      <div className="h-[22px] text-center leading-5 text-[#5c5c5c]">{label}</div>
    </section>
  );
}

function SmallTool({ icon, label, off, caret }: { icon: React.ReactNode; label: string; off?: boolean; caret?: boolean }) {
  return (
    <button className={`flex h-[26px] items-center gap-1 whitespace-nowrap ${off ? "text-[#8d8d8d]" : ""}`}>
      <span className="flex w-[18px] justify-center">{icon}</span>
      {label}
      {caret && <Caret className="ml-[2px] h-1 w-[7px]" />}
    </button>
  );
}

const I = "size-[18px]";

function Ribbon() {
  return (
    <div className="flex h-[114px] shrink-0 border-y border-[#dadbdc] bg-[#f5f6f7] text-[#3b3b3b]">
      <Group width="w-[125px]" label="Clipboard">
        <button className="ml-[7px] flex w-12 flex-col items-center pt-[2px] leading-5">
          <svg viewBox="0 0 32 38" className="h-[38px] w-8" aria-hidden="true">
            <rect x="1" y="3" width="30" height="34" rx="2" fill="#a3713b" />
            <path d="M4 6h24v28H4z" fill="#fff" />
            <path d="M5 11h22M5 15h22M5 19h22M5 23h22M5 27h22M5 31h22" stroke="#a9bfd8" />
            <path d="M9 7l3-3q4-6 8 0l3 3z" fill="#7d838a" />
          </svg>
          <span className="mt-[5px]">Paste</span>
          <Caret className="mt-1 h-1 w-[7px]" />
        </button>
        <div className="ml-[6px]">
          <SmallTool off label="Cut" icon={<svg viewBox="0 0 18 18" className={I} fill="none" stroke="#98abc8" strokeWidth="1.800" aria-hidden="true"><path d="M5 0l6 11M13 0L7 11" /><circle cx="5.500" cy="14" r="2.500" /><circle cx="12.500" cy="14" r="2.500" /></svg>} />
          <SmallTool off label="Copy" icon={<svg viewBox="0 0 18 18" className={I} fill="#f2f6fb" stroke="#9db2d0" aria-hidden="true"><path d="M1.500.5h7l3 3v10h-10zM6.500 4.500h7l3 3v10h-10z" /><path d="M9 9.500h5M9 11.500h5M9 13.500h5" /></svg>} />
        </div>
      </Group>
      <Group width="w-[141px]" label="Image">
        <button className="ml-1 flex h-[82px] w-[50px] flex-col items-center border border-[#62a2e4] bg-[#c9e0f7] leading-5">
          <span className="flex h-[45px] w-full items-center justify-center border-b border-[#62a2e4]">
            <span className="h-[27px] w-[36px] border-2 border-dotted border-[#2d63a8] bg-[#cfe3f8]" />
          </span>
          <span>Select</span>
          <Caret className="mt-1 h-1 w-[7px]" />
        </button>
        <div className="ml-1">
          <SmallTool off label="Crop" icon={<svg viewBox="0 0 18 18" className={I} fill="none" stroke="#93a3bb" strokeWidth="1.500" aria-hidden="true"><path d="M4 0v14h14M0 4h14v14M4 14L16 1" /></svg>} />
          <SmallTool label="Resize" icon={<svg viewBox="0 0 18 18" className={I} fill="#fff" stroke="#1c67a8" strokeWidth="1.500" aria-hidden="true"><path d="M1 8h8v8H1z" /><path d="M6 2h11v9H6z" /></svg>} />
          <SmallTool caret label="Rotate" icon={<svg viewBox="0 0 18 18" className={I} aria-hidden="true"><path d="M11 4l6 13h-6z" fill="#1d73b9" /><path d="M9 10v7H0z" fill="#b5b8bc" /><path d="M1 6q0-4 4-4M4 0l3 2-3 2" fill="none" stroke="#1d73b9" strokeWidth="1.500" /></svg>} />
        </div>
      </Group>
      <Group width="w-[96px]" label="Tools">
        <div className="ml-1 grid grid-cols-3 pt-1">
          {[
            <svg viewBox="0 0 20 20" className="size-5" key="pencil" aria-hidden="true"><path d="M1 19l2-6L14 2l4 4L7 17z" fill="#f4cf6b" stroke="#77633a" /><path d="M14 2l2-2 4 4-2 2z" fill="#c44a3d" /><path d="M1 19l1-3 2 2z" fill="#222" /></svg>,
            <svg viewBox="0 0 22 20" className="h-5 w-[22px]" key="fill" aria-hidden="true"><path d="M6 11l8-8 7 7-8 8z" fill="#b9daf0" stroke="#567c9c" /><path d="M12 5V1" stroke="#555" strokeWidth="1.500" /><path d="M1 17q-1-8 8-10l5 1q-8 0-9 5l-1 5z" fill="#ef6430" /></svg>,
            <span key="text" className="font-['Liberation_Serif',serif] text-[25px] leading-6 font-bold text-[#1e3c6b]">A</span>,
            <svg viewBox="0 0 20 18" className="h-[18px] w-5" key="eraser" aria-hidden="true"><path d="M1 13l8-12h10l-7 12z" fill="#f3a4a0" stroke="#c97874" /><path d="M1 13h11v4H1zM12 13l7-12v4l-7 12z" fill="#e17f79" /></svg>,
            <svg viewBox="0 0 20 20" className="size-5" key="picker" aria-hidden="true"><path d="M1 19l2-5 7-7 3 3-7 7z" fill="#d7e4ef" stroke="#587086" /><path d="M9 5l6 6 1-2 3-3q1-3-1-5-3-1-4 1l-3 3z" fill="#1f5f9f" /></svg>,
            <svg viewBox="0 0 20 20" className="size-5" key="zoom" aria-hidden="true"><path d="M11 12l6 6" stroke="#a5793c" strokeWidth="3" /><circle cx="8" cy="8" r="6.500" fill="#e2f0fb" stroke="#8aa0b4" strokeWidth="1.500" /></svg>,
          ].map((icon, i) => (
            <button key={i} aria-label={["Pencil", "Fill with colour", "Text", "Eraser", "Colour picker", "Magnifier"][i]} className="flex h-9 w-7 items-center justify-center">
              {icon}
            </button>
          ))}
        </div>
      </Group>
      <Group width="w-[62px]">
        <button className="flex w-full flex-col items-center pt-[2px] leading-5">
          <svg viewBox="0 0 40 40" className="size-10" aria-hidden="true">
            <rect x=".5" y=".5" width="39" height="39" fill="#e9f1f7" stroke="#8c9094" />
            <path d="M15 7C5 11 1 25 8 34c4 4 12 4 17 1-6-1-9-4-9-8-4 2-7-1-6-7 1-5 3-8 5-13z" fill="#f1592a" />
            <path d="M19 22l9-7 5 6-6 10q-5 6-13 4 6-4 5-13z" fill="#a97438" />
            <path d="M28 14L38 1v14l-5 6z" fill="#46525e" />
          </svg>
          <span className="mt-[3px]">Brushes</span>
          <Caret className="mt-1 h-1 w-[7px]" />
        </button>
      </Group>
      <Group width="w-[286px]" label="Shapes">
        <div className="mt-[2px] ml-[5px] flex h-[75px] border border-[#dcdee1] bg-[#fbfcfd]">
          <div className="grid w-[170px] grid-cols-7 content-around">
            {shapePaths.map((d, i) => (
              <button key={i} aria-label={`Shape ${i + 1}`} className="flex h-6 items-center justify-center">
                <svg viewBox="-1 -1 22 20" className="h-[18px] w-5" aria-hidden="true">
                  <path d={d} fill={i < 2 ? "none" : "#eef6fb"} stroke="#1f66a5" strokeWidth="1.200" />
                </svg>
              </button>
            ))}
          </div>
          <div className="flex w-[17px] flex-col items-center justify-around border-l border-[#dcdee1] bg-[#f5f6f7] text-[#44546a]">
            <Caret className="h-1 w-[7px] rotate-180 text-[#b0b5bb]" />
            <Caret className="h-1 w-[7px]" />
            <span className="border-t-2 border-[#44546a] pt-[2px]"><Caret className="h-1 w-[7px]" /></span>
          </div>
        </div>
        <div className="ml-[5px]">
          <SmallTool off caret label="Outline" icon={<svg viewBox="0 0 18 18" className={I} fill="none" stroke="#9db0c8" strokeWidth="1.500" aria-hidden="true"><path d="M12 4H1v13h13V9" /><path d="M5 14l1-3L15 1l2 2-9 10z" fill="#e6edf5" /></svg>} />
          <SmallTool off caret label="Fill" icon={<svg viewBox="0 0 18 18" className={I} aria-hidden="true"><path d="M3 7l7-6 7 7-7 6z" fill="#dfe8f2" stroke="#9db0c8" /><path d="M0 13h18v5H0zM1 13q0-5 5-8l-2 8z" fill="#93a9cb" /></svg>} />
        </div>
      </Group>
      <Group width="w-[62px]">
        <button className="flex w-full flex-col items-center pt-[5px] leading-5 text-[#8d8d8d]">
          <svg viewBox="0 0 40 34" className="h-[34px] w-10" aria-hidden="true">
            <path d="M0 0h40v1H0zM0 4h40v2H0zM0 9h40v3H0zM0 15h40v5H0zM0 24h40v8H0z" fill="#7b8fb0" />
          </svg>
          <span className="mt-[6px]">Size</span>
          <Caret className="mt-1 h-1 w-[7px] text-[#b0b5bb]" />
        </button>
      </Group>
      <Group width="w-[435px]" label="Colours">
        <button className="ml-1 flex h-[82px] w-[50px] flex-col items-center border border-[#62a2e4] bg-[#c9e0f7] pt-[2px] leading-[17px]">
          <span className="size-10 border border-[#7a7a7a] bg-[#a9bed4] p-[2px]"><span className="block h-full w-full bg-black" /></span>
          <span className="mt-[5px]">Colour<br />1</span>
        </button>
        <button className="ml-[2px] flex h-[82px] w-[46px] flex-col items-center pt-2 leading-[17px]">
          <span className="size-[30px] border border-[#7a7a7a] bg-white" />
          <span className="mt-[10px]">Colour<br />2</span>
        </button>
        <div className="ml-[3px] grid grid-cols-10 gap-[2px] pt-px">
          {swatches.map((s, i) => (
            <button key={i} aria-label={`Colour swatch ${i + 1}`} className="size-[25px] border border-[#a0a0a0] bg-white p-px">
              <span className={`block h-full w-full ${s}`} />
            </button>
          ))}
        </div>
        <button className="ml-[2px] flex h-[82px] w-[50px] flex-col items-center pt-1 leading-[17px]">
          <span className="size-[36px] border border-[#8f8f8f] bg-white p-[2px]">
            <span className="block h-full w-full bg-[linear-gradient(to_bottom,transparent,#808080cc),linear-gradient(to_right,#f00,#ff0,#0f0,#0ff,#00f,#f0f,#f00)]" />
          </span>
          <span className="mt-[7px]">Edit<br />colours</span>
        </button>
      </Group>
    </div>
  );
}

function Paint() {
  return (
    <div className="flex min-w-0 flex-1 flex-col bg-[#c8d0e0] text-[14px]">
      <header className="flex h-[29px] shrink-0 items-center bg-white text-[#9a9a9a]">
        <PaletteIcon className="h-[18px] w-5" />
        <span className="ml-[7px] h-4 w-px bg-[#777]" />
        <button aria-label="Save" className="ml-[13px]">
          <svg viewBox="0 0 16 16" className="size-4" aria-hidden="true"><path d="M0 0h16v16H0z" fill="#7d5bb0" /><path d="M3 0h10v8H3z" fill="#fff" /><path d="M4 11h8v5H4z" fill="#ddd3ee" /><path d="M4 3h8M4 5.500h8" stroke="#b9a6d8" /></svg>
        </button>
        <button aria-label="Undo" className="ml-[10px] text-[#2a9be0]">
          <svg viewBox="0 0 17 18" className="h-[18px] w-[17px]" fill="none" stroke="currentColor" strokeWidth="3" aria-hidden="true"><path d="M6 1L2 5l4 4M2 5h6c8 0 8 11 0 11" /></svg>
        </button>
        <button aria-label="Redo" className="ml-[9px] text-[#a3b4cd]">
          <svg viewBox="0 0 17 18" className="h-[18px] w-[17px]" fill="none" stroke="currentColor" strokeWidth="3" aria-hidden="true"><path d="M11 1l4 4-4 4M15 5H9c-8 0-8 11 0 11" /></svg>
        </button>
        <button aria-label="Customise toolbar" className="ml-[10px] border-t border-black pt-[2px] text-black"><Caret className="h-1 w-[7px]" /></button>
        <span className="ml-[13px] h-4 w-px bg-[#777]" />
        <h1 className="ml-[7px] flex-1">Untitled - Paint</h1>
        <button aria-label="Minimise Paint" className="flex w-[58px] justify-center"><MinGlyph /></button>
        <button aria-label="Restore Paint" className="flex w-[58px] justify-center"><RestoreGlyph /></button>
        <button aria-label="Close Paint" className="mr-[3px] flex w-[58px] justify-center"><CloseGlyph /></button>
      </header>
      <div className="flex h-7 shrink-0 items-stretch bg-white text-[#3b3b3b]" role="tablist">
        <button role="tab" className="w-[70px] bg-[#1979ca] text-white">File</button>
        <button role="tab" aria-selected="true" className="relative z-10 -mb-px w-[69px] border border-b-0 border-[#dadbdc] bg-[#f5f6f7]">Home</button>
        <button role="tab" className="w-[64px]">View</button>
        <span className="flex-1" />
        <button aria-label="Collapse ribbon" className="mr-3 text-[#888]">
          <svg viewBox="0 0 12 7" className="h-[7px] w-3" fill="none" stroke="currentColor" aria-hidden="true"><path d="M0 6l6-5 6 5" /></svg>
        </button>
        <button aria-label="Help" className="mr-1 size-[18px] self-center rounded-full bg-[#1079d8] text-center text-[13px] leading-[18px] font-bold text-white">?</button>
      </div>
      <Ribbon />
      <div className="flex min-h-0 flex-1">
        <div className="min-w-0 flex-1 overflow-hidden pt-[5px] pl-[5px]">
          <div className="h-full overflow-hidden border-t-[5px] border-black">
            <div className="-ml-[2px] h-[1080px] w-[1858px]">
              <BoardWindow dialogPlace="top-[333px] left-[635px]" />
            </div>
          </div>
        </div>
        <div className="flex w-[21px] flex-col items-center border-l border-white bg-[#f0f0f0]" aria-label="Vertical scroll bar">
          <button aria-label="Scroll up" className="flex h-[21px] items-center">
            <svg viewBox="0 0 10 6" className="h-[6px] w-[10px]" fill="none" stroke="#555" strokeWidth="2" aria-hidden="true"><path d="M0 6l5-5 5 5" /></svg>
          </button>
          <span className="w-full flex-[637] bg-[#cdcdcd]" />
          <span className="flex-[176]" />
          <button aria-label="Scroll down" className="flex h-[21px] items-center">
            <svg viewBox="0 0 10 6" className="h-[6px] w-[10px]" fill="none" stroke="#555" strokeWidth="2" aria-hidden="true"><path d="M0 0l5 5 5-5" /></svg>
          </button>
        </div>
      </div>
      <div className="flex h-[21px] shrink-0 items-center border-t border-white bg-[#f0f0f0] pr-[21px]" aria-label="Horizontal scroll bar">
        <button aria-label="Scroll left" className="flex w-[21px] justify-center">
          <svg viewBox="0 0 6 10" className="h-[10px] w-[6px]" fill="none" stroke="#555" strokeWidth="2" aria-hidden="true"><path d="M6 0L1 5l5 5" /></svg>
        </button>
        <span className="h-full flex-[839] bg-[#cdcdcd]" />
        <span className="flex-[938]" />
        <button aria-label="Scroll right" className="flex w-[21px] justify-center">
          <svg viewBox="0 0 6 10" className="h-[10px] w-[6px]" fill="none" stroke="#555" strokeWidth="2" aria-hidden="true"><path d="M0 0l5 5-5 5" /></svg>
        </button>
      </div>
      <footer className="flex h-[33px] shrink-0 items-stretch border-t border-[#d4d4d4] bg-[#f0f0f0] py-px text-black">
        <div className="flex w-[200px] items-center border-r border-[#d4d4d4] pl-[3px]">
          <svg viewBox="0 0 17 17" className="size-[17px]" stroke="#3a5578" fill="none" aria-hidden="true"><path d="M8.500 1v15M1 8.500h15M6.500 3l2-2 2 2M6.500 14l2 2 2-2M3 6.500l-2 2 2 2M14 6.500l2 2-2 2" /></svg>
        </div>
        <div className="flex w-[200px] items-center border-r border-[#d4d4d4] pl-1">
          <svg viewBox="0 0 19 17" className="h-[17px] w-[19px]" stroke="#3a5578" fill="none" aria-hidden="true"><path d="M3.500.5h15v12h-15z" strokeDasharray="1 1" /><path d="M1.500 1v13M3 15.500h15" /></svg>
        </div>
        <div className="flex w-[200px] items-center gap-[6px] border-r border-[#d4d4d4] pl-1">
          <svg viewBox="0 0 19 17" className="h-[17px] w-[19px]" stroke="#3a5578" fill="#dceefa" aria-hidden="true"><path d="M3.500.5h15v12h-15z" /><path d="M1.500 1v13M3 15.500h15" /></svg>
          <span>3840 × 1080px</span>
        </div>
        <div className="w-[200px] border-r border-[#d4d4d4]" />
        <span className="flex-1 border-r border-[#d4d4d4]" />
        <div className="flex items-center pr-[5px] pl-[23px]">
          <span>100%</span>
          <button aria-label="Zoom out" className="ml-2 flex size-5 items-center justify-center rounded-full border border-[#777] bg-linear-to-b from-white to-[#d8d8d8]">
            <span className="h-[2px] w-[10px] bg-[#555]" />
          </button>
          <input
            type="range"
            aria-label="Zoom"
            min={0}
            max={100}
            defaultValue={50}
            className="mx-[14px] h-6 w-[105px] appearance-none bg-transparent [&::-webkit-slider-runnable-track]:h-[5px] [&::-webkit-slider-runnable-track]:border [&::-webkit-slider-runnable-track]:border-[#d0d0d0] [&::-webkit-slider-runnable-track]:bg-[#e7eaea] [&::-webkit-slider-thumb]:-mt-[10px] [&::-webkit-slider-thumb]:h-[23px] [&::-webkit-slider-thumb]:w-[13px] [&::-webkit-slider-thumb]:appearance-none [&::-webkit-slider-thumb]:bg-[#0078d7] [&::-webkit-slider-thumb]:[clip-path:polygon(0_0,100%_0,100%_72%,50%_100%,0_72%)]"
          />
          <button aria-label="Zoom in" className="relative flex size-5 items-center justify-center rounded-full border border-[#777] bg-linear-to-b from-white to-[#d8d8d8]">
            <svg viewBox="0 0 10 10" className="size-[10px]" stroke="#555" strokeWidth="2" aria-hidden="true"><path d="M5 0v10M0 5h10" /></svg>
          </button>
        </div>
      </footer>
    </div>
  );
}

/* Faded scroll strip that floats over the lower left corner of the desktop. */
function FadedScroll() {
  const end = "flex w-[22px] items-center justify-center border border-[#d9d9d9] bg-[#ececec] text-[#b5b5b5]";
  return (
    <div className="absolute bottom-[2px] left-1 flex h-[21px] w-[242px] bg-[#f5f5f5]" aria-hidden="true">
      <span className={end}><Caret className="h-1 w-[7px] rotate-90" /></span>
      <span className="w-[42px] border border-[#dedede] bg-[#eeeeee]" />
      <span className="flex-1 border-y border-[#e6e6e6]" />
      <span className={end}><Caret className="h-1 w-[7px] -rotate-90" /></span>
    </div>
  );
}

export default function App() {
  return (
    <div className="flex h-screen w-full overflow-hidden bg-black font-['Open_Sans','Noto_Sans',sans-serif]">
      <div className="flex min-w-0 flex-1">
        <div className="relative min-w-0 flex-1">
          <BoardWindow dialogPlace="top-[18px] left-[1129px]" />
          <FadedScroll />
        </div>
        <TaskBar />
      </div>
      <div className="flex min-w-0 flex-1">
        <Paint />
        <TaskBar large />
      </div>
    </div>
  );
}
